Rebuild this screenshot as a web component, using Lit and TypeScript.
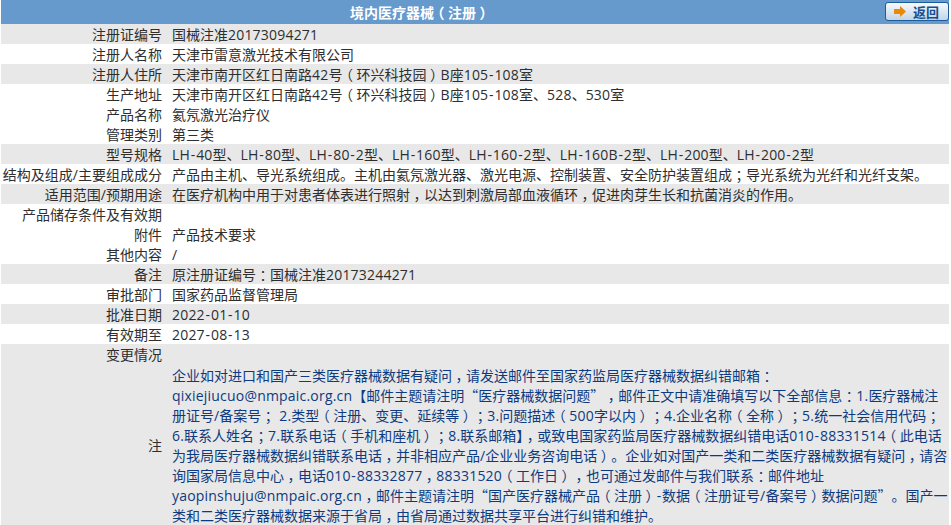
import { LitElement, html, css } from "lit";
import { customElement } from "lit/decorators.js";

const rows: [string, string, boolean][] = [
  ["注册证编号", "国械注准20173094271", true],
  ["注册人名称", "天津市雷意激光技术有限公司", false],
  ["注册人住所", "天津市南开区红日南路42号（环兴科技园）B座105-108室", true],
  ["生产地址", "天津市南开区红日南路42号（环兴科技园）B座105-108室、528、530室", false],
  ["产品名称", "氦氖激光治疗仪", false],
  ["管理类别", "第三类", false],
  ["型号规格", "LH-40型、LH-80型、LH-80-2型、LH-160型、LH-160-2型、LH-160B-2型、LH-200型、LH-200-2型", true],
  ["结构及组成/主要组成成分", "产品由主机、导光系统组成。主机由氦氖激光器、激光电源、控制装置、安全防护装置组成；导光系统为光纤和光纤支架。", false],
  ["适用范围/预期用途", "在医疗机构中用于对患者体表进行照射，以达到刺激局部血液循环，促进肉芽生长和抗菌消炎的作用。", true],
  ["产品储存条件及有效期", "", false],
  ["附件", "产品技术要求", false],
  ["其他内容", "/", false],
  ["备注", "原注册证编号：国械注准20173244271", true],
  ["审批部门", "国家药品监督管理局", false],
  ["批准日期", "2022-01-10", true],
  ["有效期至", "2027-08-13", false],
  ["变更情况", "", true],
];

const note = "企业如对进口和国产三类医疗器械数据有疑问，请发送邮件至国家药监局医疗器械数据纠错邮箱：qixiejiucuo@nmpaic.org.cn【邮件主题请注明“医疗器械数据问题”，邮件正文中请准确填写以下全部信息：1.医疗器械注册证号/备案号； 2.类型（注册、变更、延续等）；3.问题描述（500字以内）；4.企业名称（全称）；5.统一社会信用代码；6.联系人姓名；7.联系电话（手机和座机）；8.联系邮箱】，或致电国家药监局医疗器械数据纠错电话010-88331514（此电话为我局医疗器械数据纠错联系电话，并非相应产品/企业业务咨询电话）。企业如对国产一类和二类医疗器械数据有疑问，请咨询国家局信息中心，电话010-88332877，88331520（工作日），也可通过发邮件与我们联系：邮件地址yaopinshuju@nmpaic.org.cn，邮件主题请注明“国产医疗器械产品（注册）-数据（注册证号/备案号）数据问题”。国产一类和二类医疗器械数据来源于省局，由省局通过数据共享平台进行纠错和维护。";

const fmt = (s: string) =>
  s
    .split(/([A-Za-z0-9@.\/ ]+|-|[，；：（）]|[“”])/)
    .filter(Boolean)
    .map((t) => {
      if (/^[，；：（）]$/.test(t)) return html`<span class="p">${t}</span>`;
      if (t === "“") return html`<span class="q ql">${t}</span>`;
      if (t === "”") return html`<span class="q qr">${t}</span>`;
      if (t === "-") return html`<span class="e h">${t}</span>`;
      if (/^[A-Za-z0-9@.\/ ]/.test(t)) return html`<span class="e">${t}</span>`;
      return t;
    });

@customElement("app-root")
export class AppRoot extends LitElement {
  static styles = css`
    :host {
      display: block;
      width: 951px;
      height: 525px;
      overflow: hidden;
      font-family: "Noto Sans CJK SC", sans-serif;
      font-size: 14px;
      color: #2e2e2e;
      background: #fff;
    }
    .wrap { margin: 0 2px 0 1px; }
    .e { font-family: "Open Sans", sans-serif; letter-spacing: 0.2px; line-height: 1; }
    .h { padding: 0 0.7px; }
    .p { font-feature-settings: "halt"; padding: 0 3.5px; line-height: 1; }
    .q { display: inline-block; width: 14px; line-height: 1; }
    .ql { text-align: right; }
    .qr { text-align: left; }
    .head {
      height: 24px;
      background: #6699cc;
      display: grid;
      grid-template-columns: 838px 1fr;
      align-items: center;
      color: #fff;
      font-weight: bold;
      font-size: 14px;
    }
    .title { text-align: center; }
    .back {
      justify-self: end;
      margin-top: -1px;
      width: 64px;
      height: 19px;
      box-sizing: border-box;
      border: 1px solid #1d5c9b;
      border-radius: 3px;
      background: linear-gradient(#f6f9fc, #c3d5e8);
      display: flex;
      align-items: center;
      gap: 7px;
      padding-left: 8px;
      color: #14508f;
      font-size: 13px;
      font-weight: bold;
      line-height: 1;
    }
    .row {
      display: grid;
      grid-template-columns: 161px 1fr;
      column-gap: 10px;
      height: 20px;
      line-height: 20px;
      white-space: nowrap;
    }
    .row.g { background: #e8e8e8; }
    .l { text-align: right; }
    .note {
      display: grid;
      grid-template-columns: 161px 1fr;
      column-gap: 10px;
      background: #e8e8e8;
      align-items: center;
    }
    .note .t {
      color: #0d3a80;
      line-height: 20px;
      width: 777px;
      padding-top: 1px;
    }
  `;
  render() {
    return html`<div class="wrap" lang="zh-CN">
      <div class="head">
        <span class="title">${fmt("境内医疗器械（注册）")}</span>
        <span class="back">
          <svg width="12" height="11" viewBox="0 0 12 11"><path d="M0 3h6V0l6 5.5L6 11V8H0z" fill="#e8890c"/></svg>
          <span>返回</span>
        </span>
      </div>
      ${rows.map(([a, b, g]) => html`<div class="row ${g ? "g" : ""}"><span class="l">${fmt(a)}</span><span>${fmt(b)}</span></div>`)}
      <div class="note"><span class="l">注</span><span class="t">${fmt(note)}</span></div>
    </div>`;
  }
}
